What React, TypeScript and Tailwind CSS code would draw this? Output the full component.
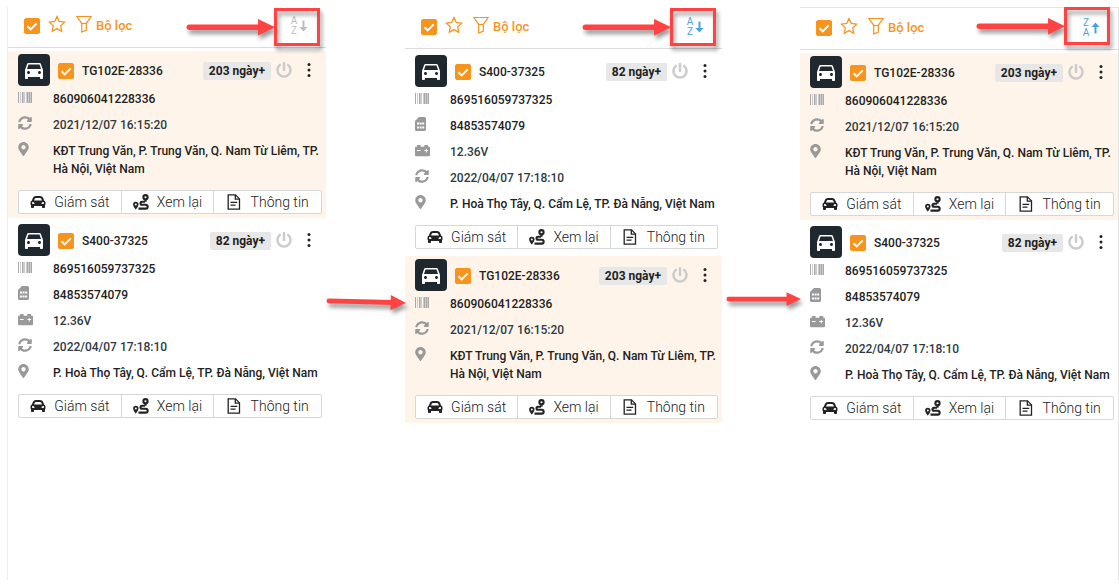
import React from "react";
import { FaCarAlt, FaCarBattery, FaMapMarkerAlt, FaPowerOff, FaSyncAlt } from "react-icons/fa";
import { MdDirectionsCar } from "react-icons/md";

type Device = {
  id: string;
  name: string;
  offline: string;
  imei: string;
  phone?: string;
  voltage?: string;
  updated: string;
  address: string;
  highlighted?: boolean;
};

const tg102e: Device = {
  id: "tg102e",
  name: "TG102E-28336",
  offline: "203 ngày+",
  imei: "860906041228336",
  updated: "2021/12/07 16:15:20",
  address: "KĐT Trung Văn, P. Trung Văn, Q. Nam Từ Liêm, TP. Hà Nội, Việt Nam",
  highlighted: true,
};

const s400: Device = {
  id: "s400",
  name: "S400-37325",
  offline: "82 ngày+",
  imei: "869516059737325",
  phone: "84853574079",
  voltage: "12.36V",
  updated: "2022/04/07 17:18:10",
  address: "P. Hoà Thọ Tây, Q. Cẩm Lệ, TP. Đà Nẵng, Việt Nam",
};

function Checkbox({ label }: { label: string }) {
  return (
    <label className="grid size-4 shrink-0 cursor-pointer">
      <input
        type="checkbox"
        defaultChecked
        aria-label={label}
        className="peer col-start-1 row-start-1 size-4 appearance-none rounded-xs border border-[#f7941d] checked:bg-[#f7941d]"
      />
      <svg
        viewBox="0 0 16 16"
        className="pointer-events-none invisible col-start-1 row-start-1 size-4 peer-checked:visible"
        fill="none"
        stroke="#fff"
        strokeWidth="2"
      >
        <path d="M3.5 8.2l3.2 3.2 6-6" />
      </svg>
    </label>
  );
}

function StarIcon() {
  return (
    <svg viewBox="0 0 18 18" className="size-[18px]" fill="none" stroke="#f7941d" strokeWidth="1.3">
      <path d="M9 1.6l2.3 4.9 5.3.7-3.9 3.7 1 5.3L9 13.6l-4.7 2.6 1-5.3L1.4 7.2l5.3-.7z" />
    </svg>
  );
}

function FunnelIcon() {
  return (
    <svg viewBox="0 0 16 18" className="h-[18px] w-4" fill="none" stroke="#f7941d" strokeWidth="1.2">
      <path d="M.9 1.500h14.200L10.300 8.300v6.700L5.700 17V8.300z" />
      <path d="M5.700 8.500h4.600" />
    </svg>
  );
}

function BarcodeIcon() {
  return (
    <svg viewBox="0 0 14 12" className="h-3 w-3.5">
      <path fill="#a8a8a8" d="M0 1h1v11H0zM4 1h1v11H4zM9 1h1v11H9zM11 1h1v11h-1zM13 1h1v11h-1z" />
      <path fill="#cbcbcb" d="M2 1h1v11H2zM5 1h1v11H5zM6 1h1v11H6zM8 1h1v11H8zM10 1h1v11h-1zM12 1h1v11h-1z" />
    </svg>
  );
}

function SimIcon() {
  return (
    <svg viewBox="0 0 11 14" className="h-3.5 w-[11px]" fill="currentColor">
      <path
        fillRule="evenodd"
        d="M4 0h5.500A1.500 1.500 0 0 1 11 1.500v11A1.500 1.500 0 0 1 9.500 14h-8A1.500 1.500 0 0 1 0 12.500V4zM2 5.500v2h2v-2zM4.600 5.500v2h2v-2zM7.200 5.500v2h2v-2zM2 9.500v2h2v-2zM4.600 9.500v2h2v-2zM7.200 9.500v2h2v-2z"
      />
    </svg>
  );
}

function RouteIcon() {
  return (
    <svg viewBox="0 0 16 16" className="size-4" fill="none" stroke="#222">
      <circle cx="12.500" cy="3.200" r="2.100" strokeWidth="2.100" />
      <path d="M12.500 5.500v2.200" strokeWidth="2.200" />
      <path d="M12 7.700H9a1.500 1.500 0 0 0 0 3h3.700a1.900 1.900 0 0 1 0 3.900H5.500" strokeWidth="2.100" />
      <path
        d="M2.800 7.800a2.700 2.700 0 0 1 2.700 2.700c0 1.800-2.700 5.100-2.700 5.100S.1 12.300.1 10.500a2.700 2.700 0 0 1 2.700-2.700z"
        fill="#222"
        stroke="none"
      />
      <circle cx="2.800" cy="10.500" r="1" fill="#fff" stroke="none" />
    </svg>
  );
}

function DocumentIcon() {
  return (
    <svg viewBox="0 0 14 16" className="h-4 w-3.5" fill="none" stroke="#222" strokeWidth="1.300">
      <path d="M1.200.9h7.300l4 4v10.200H1.200z" />
      <path d="M8.300.9v4.200h4.200M3.500 8.300h6.700M3.500 11.200h5" />
    </svg>
  );
}

function SortButton({ order, active }: { order: "asc" | "desc"; active: boolean }) {
  const letters = order === "asc" ? ["A", "Z"] : ["Z", "A"];
  return (
    <button
      type="button"
      aria-label="Sắp xếp"
      className={`ml-auto flex items-center gap-px ${active ? "text-[#4aa3df]" : "text-[#bdbdbd]"}`}
    >
      <span className="flex w-2 flex-col items-center text-[10px] leading-[10px]">
        <span>{letters[0]}</span>
        <span>{letters[1]}</span>
      </span>
      <svg
        viewBox="0 0 9 12"
        className={`h-3 w-[9px] ${order === "desc" ? "rotate-180" : ""}`}
        fill="currentColor"
      >
        <path d="M3.500.5h2v6.500h3l-4 4.500-4-4.500h3z" />
      </svg>
    </button>
  );
}

function Arrow({ tilted }: { tilted?: boolean }) {
  return (
    <svg
      viewBox="0 0 80 24"
      className="block w-full overflow-visible drop-shadow-[2px_4px_2px_rgba(0,0,0,0.4)]"
      fill="#ff4242"
    >
      <g transform={tilted ? "rotate(1.500 40 12)" : undefined}>
        <path d="M3 12H68" stroke="#ff4242" strokeWidth="5" strokeLinecap="round" />
        <path d="M65.500 4.500L81 12L65.500 19.500z" />
      </g>
    </svg>
  );
}

function Row({ icon, children }: { icon: React.ReactNode; children: React.ReactNode }) {
  return (
    <li className="flex items-start">
      <span className="flex h-3.5 w-[35px] shrink-0 items-center text-[#999]">{icon}</span>
      <span>{children}</span>
    </li>
  );
}

function DeviceCard({ device }: { device: Device }) {
  return (
    <article className={`rounded-xs pt-[3px] pr-1 pb-1 pl-2.5 ${device.highlighted ? "bg-[#fff4e9]" : "bg-white"}`}>
      <div className="flex h-8 items-center">
        <span className="flex size-8 shrink-0 items-center justify-center rounded-sm bg-[#1f272f] text-white">
          <MdDirectionsCar className="size-6" />
        </span>
        <div className="flex grow items-center pt-0.5 pl-2">
          <Checkbox label={device.name} />
          <h2 className="pl-2 text-xs font-medium text-[#222]">{device.name}</h2>
          <span className="ml-auto rounded-xs bg-[#e7e7e7] px-1.5 text-xs leading-[18px] font-bold text-[#222]">
            {device.offline}
          </span>
          <button type="button" aria-label="Nguồn" className="ml-[5px] pb-0.5 text-[#ccc]">
            <FaPowerOff className="size-4" />
          </button>
          <button type="button" aria-label="Tuỳ chọn" className="mr-2 ml-3 pb-0.5 text-[#222]">
            <svg viewBox="0 0 10 16" className="h-4 w-2.5" fill="currentColor">
              <circle cx="5" cy="2.500" r="1.500" />
              <circle cx="5" cy="8" r="1.500" />
              <circle cx="5" cy="13.500" r="1.500" />
            </svg>
          </button>
        </div>
      </div>
      <ul className="mt-1 flex flex-col gap-2 text-xs leading-[18px] font-medium text-[#222]">
        <Row icon={<BarcodeIcon />}>{device.imei}</Row>
        {device.phone && <Row icon={<SimIcon />}>{device.phone}</Row>}
        {device.voltage && (
          <Row icon={<FaCarBattery className="size-[15px]" />}>
            <span className="text-[#2f3a42]">{device.voltage}</span>
          </Row>
        )}
        <Row icon={<FaSyncAlt className="size-3.5" />}>
          <span className="text-[#2f3a42]">{device.updated}</span>
        </Row>
        <Row icon={<FaMapMarkerAlt className="h-3.5 w-[11px]" />}>{device.address}</Row>
      </ul>
      <div className="mt-3 grid h-6 grid-cols-[103fr_93fr_107fr] divide-x divide-[#d5d8db] rounded-xs border border-[#d5d8db] bg-white text-sm font-light text-[#222]">
        <button type="button" className="flex items-center justify-center gap-2">
          <FaCarAlt className="size-4" />
          Giám sát
        </button>
        <button type="button" className="flex items-center justify-center gap-2">
          <RouteIcon />
          Xem lại
        </button>
        <button type="button" className="flex items-center justify-center gap-2.5">
          <DocumentIcon />
          Thông tin
        </button>
      </div>
    </article>
  );
}

type PanelProps = {
  devices: Device[];
  order: "asc" | "desc";
  active: boolean;
  className: string;
  calloutClassName: string;
};

function Panel({ devices, order, active, className, calloutClassName }: PanelProps) {
  return (
    <section className={className}>
      <header className="relative flex h-[41px] items-center border-b border-[#dcdcdc] pr-[18px] pb-0.5 pl-4">
        <Checkbox label="Chọn tất cả" />
        <button type="button" aria-label="Yêu thích" className="ml-2 pb-1">
          <StarIcon />
        </button>
        <button type="button" className="ml-2.5 flex items-center gap-1 text-[13px] font-medium text-[#f7941d]">
          <span className="pb-1">
            <FunnelIcon />
          </span>
          Bộ lọc
        </button>
        <SortButton order={order} active={active} />
        <div className={`pointer-events-none absolute flex items-center ${calloutClassName}`}>
          <div className="w-[88px]">
            <Arrow />
          </div>
          <div className="h-[38px] w-[46px] border-3 border-[#ff4242] drop-shadow-[2px_4px_2px_rgba(0,0,0,0.4)]" />
        </div>
      </header>
      <div className="mt-[3px] flex flex-col gap-[3px]">
        {devices.map((device) => (
          <DeviceCard key={device.id} device={device} />
        ))}
      </div>
    </section>
  );
}

export default function App() {
  return (
    <main className="grid min-h-screen grid-cols-[319fr_79fr_317fr_78fr_319fr] bg-white py-[7px] pl-[7px] font-['Roboto',sans-serif]">
      <Panel
        devices={[tg102e, s400]}
        order="asc"
        active={false}
        className="border-l border-[#eee]"
        calloutClassName="top-px right-1.5"
      />
      <div className="pt-[283px]">
        <Arrow tilted />
      </div>
      <Panel devices={[s400, tg102e]} order="asc" active className="pt-px" calloutClassName="top-0 right-1.5" />
      <div className="pt-[281px] pl-1">
        <Arrow />
      </div>
      <Panel
        devices={[tg102e, s400]}
        order="desc"
        active
        className="border-t border-r border-[#e4e4e4] pt-px"
        calloutClassName="-top-0.5 right-2"
      />
    </main>
  );
}
